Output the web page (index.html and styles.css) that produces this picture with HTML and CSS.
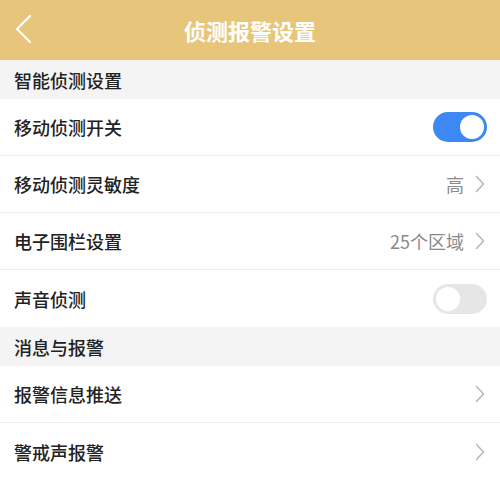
FILE: index.html
```html
<!DOCTYPE html>
<html lang="zh-CN">
<head>
<meta charset="utf-8">
<title>侦测报警设置</title>
<link rel="stylesheet" href="styles.css">
</head>
<body>
<div class="page">
  <header class="topbar">
    <svg class="back" width="20" height="30" viewBox="0 0 20 30"><path d="M17 2 L4 15 L17 28" fill="none" stroke="#fff" stroke-width="2.2" stroke-linecap="round" stroke-linejoin="round"/></svg>
    <h1 class="title">侦测报警设置</h1>
  </header>

  <div class="section">智能侦测设置</div>
  <div class="row">
    <span class="label">移动侦测开关</span>
    <span class="switch on"><span class="knob"></span></span>
  </div>
  <div class="row">
    <span class="label">移动侦测灵敏度</span>
    <span class="right"><span class="value">高</span><svg class="chev" width="10" height="18" viewBox="0 0 10 18"><path d="M1.5 1.5 L8.5 9 L1.5 16.5" fill="none" stroke="#b8b8b8" stroke-width="1.6" stroke-linecap="round" stroke-linejoin="round"/></svg></span>
  </div>
  <div class="row">
    <span class="label">电子围栏设置</span>
    <span class="right"><span class="value">25个区域</span><svg class="chev" width="10" height="18" viewBox="0 0 10 18"><path d="M1.5 1.5 L8.5 9 L1.5 16.5" fill="none" stroke="#b8b8b8" stroke-width="1.6" stroke-linecap="round" stroke-linejoin="round"/></svg></span>
  </div>
  <div class="row last">
    <span class="label">声音侦测</span>
    <span class="switch off"><span class="knob"></span></span>
  </div>

  <div class="section">消息与报警</div>
  <div class="row">
    <span class="label">报警信息推送</span>
    <span class="right"><svg class="chev" width="10" height="18" viewBox="0 0 10 18"><path d="M1.5 1.5 L8.5 9 L1.5 16.5" fill="none" stroke="#b8b8b8" stroke-width="1.6" stroke-linecap="round" stroke-linejoin="round"/></svg></span>
  </div>
  <div class="row last">
    <span class="label">警戒声报警</span>
    <span class="right"><svg class="chev" width="10" height="18" viewBox="0 0 10 18"><path d="M1.5 1.5 L8.5 9 L1.5 16.5" fill="none" stroke="#b8b8b8" stroke-width="1.6" stroke-linecap="round" stroke-linejoin="round"/></svg></span>
  </div>
</div>
</body>
</html>
```
FILE: styles.css
```css
* { box-sizing: border-box; }
html, body { margin: 0; padding: 0; background: #fff; }
body {
  font-family: "Noto Sans CJK SC", "Noto Sans", sans-serif;
  width: 500px;
  height: 480px;
  overflow: hidden;
}
.page { display: flex; flex-direction: column; }
.topbar {
  height: 60px;
  background: #e7c67b;
  display: flex;
  align-items: center;
  justify-content: center;
  position: relative;
}
.back { position: absolute; left: 13px; top: 14px; }
.title {
  margin: 0;
  color: #fff;
  font-size: 22px;
  font-weight: 700;
}
.section {
  height: 39px;
  background: #f4f4f4;
  display: flex;
  align-items: center;
  padding-left: 14px;
  font-size: 18px;
  font-weight: 500;
  color: #222;
}
.row {
  height: 57px;
  display: flex;
  align-items: center;
  justify-content: space-between;
  padding: 0 13px 0 14px;
  border-bottom: 1px solid #ececec;
  background: #fff;
}
.row.last { border-bottom: none; }
.label { font-size: 18px; font-weight: 500; color: #222; }
.right { display: flex; align-items: center; gap: 11px; padding-right: 2px; }
.value { font-size: 18px; color: #8a8a8a; }
.chev { display: block; }
.switch {
  width: 54px;
  height: 30px;
  border-radius: 15px;
  position: relative;
  display: block;
}
.switch.on { background: #3d88f2; }
.switch.off { background: #e6e6e6; }
.knob {
  position: absolute;
  top: 3px;
  width: 24px;
  height: 24px;
  border-radius: 50%;
  background: #fff;
}
.switch.on .knob { right: 3px; }
.switch.off .knob { left: 3px; }
```
